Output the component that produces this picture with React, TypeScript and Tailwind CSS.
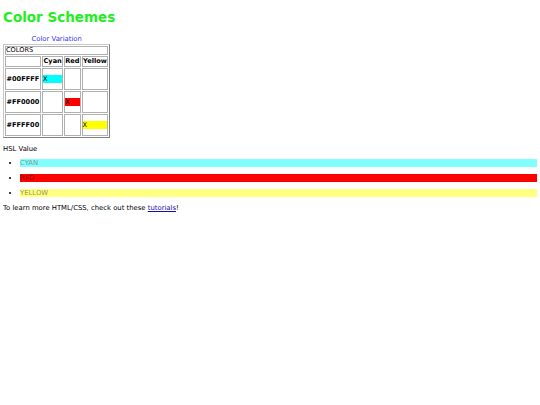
export default function App() {
  const rows = [
    { hex: '#00FFFF', col: 0, cls: 'bg-[#00ffff]' },
    { hex: '#FF0000', col: 1, cls: 'bg-[#ff0000]' },
    { hex: '#FFFF00', col: 2, cls: 'bg-[#ffff00]' },
  ];
  const cell = 'border border-[#b0b0b0] p-0';

  return (
    <div className="min-h-[405px] bg-white px-[3px] text-[6.85px] leading-[9px] text-black [font-family:'DejaVu_Sans',sans-serif]">
      <h1 className="pt-[9px] text-[13.5px] leading-[16px] font-bold text-[#22ee22]">Color Schemes</h1>

      <table className="mt-[10px] border-separate border-spacing-[1px] border border-[#c8c8c8] border-r-[#808080] border-b-[#808080] text-[6.6px]">
        <caption className="text-[#3333ee] text-[6.85px] leading-[8px] pb-[1px]">Color Variation</caption>
        <tbody>
          <tr>
            <td colSpan={4} className={`${cell} h-[9px] leading-[7px]`}>COLORS</td>
          </tr>
          <tr className="font-bold">
            <td className={`${cell} w-[36px] h-[10px]`}></td>
            <td className={`${cell} px-[0.5px]`}>Cyan</td>
            <td className={cell}>Red</td>
            <td className={`${cell} px-[0.5px]`}>Yellow</td>
          </tr>
          {rows.map((r) => (
            <tr key={r.hex}>
              <td className={`${cell} h-[22px] font-bold px-[0.5px]`}>{r.hex}</td>
              {[0, 1, 2].map((i) => (
                <td key={i} className={cell}>
                  {r.col === i && <div className={`${r.cls} h-[8px] leading-[8px]`}>X</div>}
                </td>
              ))}
            </tr>
          ))}
        </tbody>
      </table>

      <p className="mt-[7px]">HSL Value</p>
      <ul className="mt-[2px] list-disc pl-[17px]">
        <li className="h-[15px] pt-[3px]">
          <div className="bg-[#80ffff] text-[#7a9a9a] h-[8px] leading-[8px]">CYAN</div>
        </li>
        <li className="h-[15px] pt-[3px]">
          <div className="bg-[#ff0000] text-[#990000] h-[8px] leading-[8px]">RED</div>
        </li>
        <li className="h-[15px] pt-[3px]">
          <div className="bg-[#ffff80] text-[#9a9a50] h-[8px] leading-[8px]">YELLOW</div>
        </li>
      </ul>
      <p className="mt-[3px] mr-[1px]">
        To learn more HTML/CSS, check out these{' '}
        <a href="#" className="text-[#1a0dab] underline">tutorials</a>!
      </p>
    </div>
  );
}
